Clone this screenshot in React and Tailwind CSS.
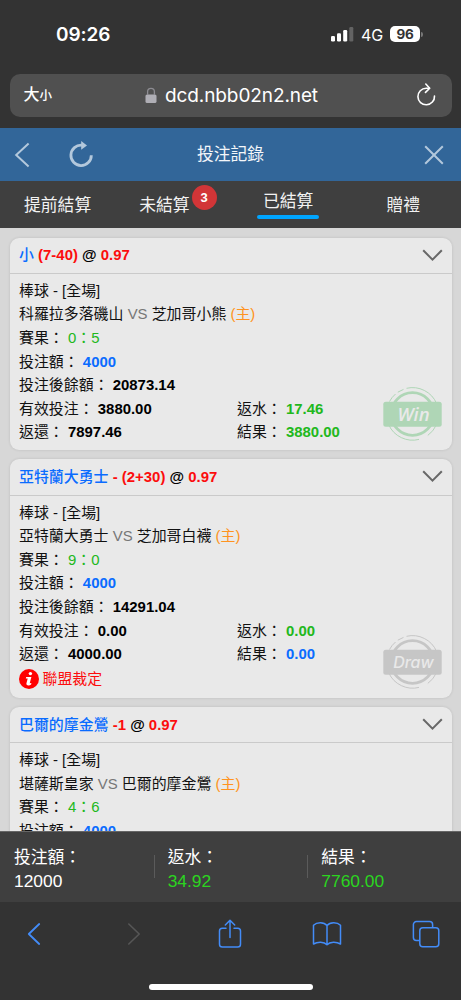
import clsx from 'clsx';

const bets = [
  {
    id: 1,
    pick: '小',
    line: '(7-40)',
    odds: '0.97',
    away: '科羅拉多落磯山',
    home: '芝加哥小熊',
    score: '0：5',
    stake: '4000',
    balance: '20873.14',
    settled: { valid: '3880.00', rebate: '17.46', returned: '7897.46', result: '3880.00' },
    status: 'Win',
  },
  {
    id: 2,
    pick: '亞特蘭大勇士',
    line: '- (2+30)',
    odds: '0.97',
    away: '亞特蘭大勇士',
    home: '芝加哥白襪',
    score: '9：0',
    stake: '4000',
    balance: '14291.04',
    settled: { valid: '0.00', rebate: '0.00', returned: '4000.00', result: '0.00' },
    status: 'Draw',
    notice: '聯盟裁定',
  },
  {
    id: 3,
    pick: '巴爾的摩金鶯',
    line: '-1',
    odds: '0.97',
    away: '堪薩斯皇家',
    home: '巴爾的摩金鶯',
    score: '4：6',
    stake: '4000',
  },
];

const tabs = [
  { label: '提前結算' },
  { label: '未結算', badge: 3 },
  { label: '已結算', active: true },
  { label: '贈禮' },
];

const totals = [
  { label: '投注額：', value: '12000', color: 'text-white' },
  { label: '返水：', value: '34.92', color: 'text-[#2bd51f]' },
  { label: '結果：', value: '7760.00', color: 'text-[#2bd51f]' },
];

function StatusBar() {
  return (
    <div className="flex h-[74px] items-start justify-between pl-[56px] pr-[38px] pt-[22px] font-['Inter','Liberation_Sans',sans-serif] text-white">
      <span className="pt-px text-[19px] font-semibold leading-6 tracking-[-0.1px]">09:26</span>
      <div className="flex h-6 items-center">
        <svg width="24" height="16" viewBox="0 0 24 16" className="mr-[7px]">
          <rect x="1" y="10" width="4" height="5.5" rx="1.2" fill="#fff" />
          <rect x="7" y="7.3" width="4" height="8.2" rx="1.2" fill="#fff" />
          <rect x="13.2" y="4" width="4" height="11.5" rx="1.2" fill="#fff" />
          <rect x="19.3" y="1" width="4" height="14.5" rx="1.2" fill="#636363" />
        </svg>
        <span className="mr-[7px] pt-px text-[16px] leading-6 tracking-[-0.1px]">4G</span>
        <span className="flex h-4 w-[30px] items-center justify-center rounded-[5px] bg-white text-[13.5px] font-bold leading-4 tracking-[-0.2px] text-[#333]">96</span>
        <span className="ml-px h-[5px] w-[2px] rounded-r-full bg-[#777]" />
      </div>
    </div>
  );
}

function AddressBar() {
  return (
    <div className="mx-[9.5px] flex h-[42.5px] items-center justify-between rounded-[10px] bg-[#505050] pl-[14px] pr-[16px] text-white">
      <span className="w-[40px] whitespace-nowrap pt-px font-medium leading-6">
        <span className="text-[16px]">大</span>
        <span className="text-[12.5px]">小</span>
      </span>
      <div className="flex items-center pl-[2px]">
        <svg width="12" height="17" viewBox="0 0 12 17" className="mr-[8px]">
          <rect x="0.5" y="7.5" width="11" height="8.5" rx="1.6" fill="#afaeb5" />
          <path d="M2.6 8V4.7a3.4 3.4 0 0 1 6.8 0V8" fill="none" stroke="#8d8c92" strokeWidth="1.3" />
        </svg>
        <span className="pt-px font-['Inter','Liberation_Sans',sans-serif] text-[19px] leading-6 tracking-[-0.1px]">dcd.nbb02n2.net</span>
      </div>
      <span className="flex w-[38px] justify-end">
        <svg width="20" height="24" viewBox="0 0 20 24" fill="none" stroke="#fff" strokeWidth="1.6" strokeLinecap="round" strokeLinejoin="round">
          <path d="M13.3 5.2H10.2A8.3 8.3 0 1 0 18.5 13" />
          <path d="M9.8 1l3.9 4.2-4.2 4.2" />
        </svg>
      </span>
    </div>
  );
}

function TitleBar() {
  return (
    <div className="grid h-[53px] grid-cols-3 items-center bg-[#326699]">
      <div className="flex items-center pl-[14px]">
        <svg width="17" height="26" viewBox="0 0 17 26" fill="none" stroke="#b3c8dc" strokeWidth="2">
          <path d="M14.6 1.6L2.2 13l12.4 11.4" />
        </svg>
        <svg width="26" height="28" viewBox="0 0 26 28" className="ml-[37px]">
          <path d="M14 4.2A10.2 10.2 0 1 0 23.3 14.2" fill="none" stroke="#b3c8dc" strokeWidth="2.8" />
          <path d="M13.2 0l5.8 4.6-5.800 4.200z" fill="#b3c8dc" />
        </svg>
      </div>
      <h1 className="text-center text-[16.8px] font-normal text-[#f4f7fa]">投注記錄</h1>
      <div className="flex justify-end pr-[17px]">
        <svg width="20" height="20" viewBox="0 0 20 20" stroke="#b3c8dc" strokeWidth="2">
          <path d="M1.2 1.2l17.6 17.6M18.8 1.2l-17.6 17.6" />
        </svg>
      </div>
    </div>
  );
}

function Tabs() {
  return (
    <div className="grid h-[47px] shrink-0 grid-cols-4 bg-[#3f3f3f] text-[16.8px] leading-6 text-[#f2f2f2]">
      {tabs.map((tab) => (
        <div key={tab.label} className={clsx('flex justify-center', tab.active ? 'pt-[9px]' : 'pt-[13px]', tab.badge && 'pr-[17px]')}>
          <div className="relative">
            {tab.label}
            {tab.active && <div className="-mx-[6px] mt-[0.5px] h-1 rounded-full bg-[#00a5ff]" />}
            {tab.badge && (
              <span className="absolute -right-[27px] -top-[9px] flex size-[25px] items-center justify-center rounded-full bg-[#d23537] font-['Liberation_Sans',sans-serif] text-[13px] font-bold text-white">
                {tab.badge}
              </span>
            )}
          </div>
        </div>
      ))}
    </div>
  );
}

function Stamp({ status }) {
  const color = status === 'Win' ? '#afd6b6' : '#c6c6c6';
  return (
    <svg width="59" height="54" viewBox="0 0 59 54" className="absolute bottom-[9px] right-[9.5px]">
      <circle cx="29.5" cy="27" r="21.3" fill="none" stroke={color} strokeWidth="2.8" />
      <path
        d="M23.5 1.3A26.3 26.3 0 0 1 53.6 16.5M14.8 5.2L20.5 2.4M6.5 14.5A26.3 26.3 0 0 1 12.5 7M5.8 38A26.3 26.3 0 0 0 36 52.4M44.8 48.4A26.3 26.3 0 0 0 53.3 38"
        fill="none"
        stroke={color}
        strokeWidth="1"
      />
      <rect x="0.3" y="14.7" width="58.4" height="25" rx="2.5" fill={color} />
      <text
        x="30.5"
        y={status === 'Win' ? 33.6 : 33}
        textAnchor="middle"
        fill="#e9e9e9"
        className={clsx('italic', status === 'Win' ? "font-['Open_Sans',sans-serif] text-[18.5px] font-semibold" : "font-['Inter','Liberation_Sans',sans-serif] text-[16px] font-medium")}
      >
        {status}
      </text>
    </svg>
  );
}

function Field({ label, value, color = 'text-black' }) {
  return (
    <div>
      {label}： <b className={color}>{value}</b>
    </div>
  );
}

function BetCard({ bet }) {
  const { settled } = bet;
  return (
    <div className="relative shrink-0 rounded-[9px] bg-[#e9e9e9] text-[14.93px] text-[#111] shadow-[0_0_3px_rgba(0,0,0,0.12)]">
      <div className="flex h-[36.2px] items-center justify-between border-b border-[#cacaca] pl-[9.5px] pr-[9px]">
        <div className="pt-px font-bold">
          <span className="font-medium text-[#0a6cff]">{bet.pick}</span>{' '}
          <span className="text-[#fc0d0d]">{bet.line}</span> <span className="text-black">@</span>{' '}
          <span className="text-[#fc0d0d]">{bet.odds}</span>
        </div>
        <svg width="21" height="13" viewBox="0 0 21 13" fill="none" stroke="#686868" strokeWidth="2">
          <path d="M1.2 1.3l9.3 9.4 9.3-9.4" />
        </svg>
      </div>
      <div className="px-[9.5px] pb-[6px] pt-[5.1px] leading-[23.6px]">
        <div>棒球 - [全場]</div>
        <div>
          {bet.away} <span className="text-[#777]">VS</span> {bet.home} <span className="text-[#ff9320]">(主)</span>
        </div>
        <div>
          賽果： <span className="text-[#22b81c]">{bet.score}</span>
        </div>
        <Field label="投注額" value={bet.stake} color="text-[#0a6cff]" />
        {bet.balance && <Field label="投注後餘額" value={bet.balance} />}
        {settled && (
          <div className="grid grid-cols-[218px_1fr]">
            <Field label="有效投注" value={settled.valid} />
            <Field label="返水" value={settled.rebate} color="text-[#22b81c]" />
            <Field label="返還" value={settled.returned} />
            <Field label="結果" value={settled.result} color={bet.status === 'Win' ? 'text-[#22b81c]' : 'text-[#0a6cff]'} />
          </div>
        )}
        {bet.notice && (
          <div className="flex h-[25.8px] items-center text-[#fc0d0d]">
            <svg width="20" height="20" viewBox="0 0 20 20" className="mr-[3.5px]">
              <circle cx="10" cy="10" r="10" fill="#f00" />
              <circle cx="11.4" cy="4.6" r="1.7" fill="#fff" />
              <path d="M7.2 7.9h5.2l-1.7 6.4 1.7-.3-.3 1.5c-1.6 1.2-5.2 1.4-4.7-.9l1.3-5.1H6.8z" fill="#fff" />
            </svg>
            {bet.notice}
          </div>
        )}
      </div>
      {bet.status && <Stamp status={bet.status} />}
    </div>
  );
}

function Summary() {
  return (
    <div className="grid h-[71px] shrink-0 grid-cols-3 border-t border-[#666] bg-[#3f3f3f] pt-[14px] text-white">
      {totals.map((item, i) => (
        <div key={item.label} className="relative pl-[14px]">
          {i > 0 && <span className="absolute left-0 top-[9px] h-[23px] w-px bg-[#5b5b5b]" />}
          <div className="text-[16.8px] leading-6">{item.label}</div>
          <div className={clsx('text-[17.4px] leading-[22px]', item.color)}>{item.value}</div>
        </div>
      ))}
    </div>
  );
}

function Toolbar() {
  return (
    <div className="flex h-[98px] shrink-0 flex-col items-center justify-between bg-[#333] pb-[9px] pt-[16px]">
      <div className="flex h-[32px] w-full items-center justify-between pl-[27px] pr-[21px] text-[#438cf8]">
        <svg width="14" height="24" viewBox="0 0 14 24" fill="none" stroke="currentColor" strokeWidth="1.8" strokeLinecap="round" strokeLinejoin="round">
          <path d="M12.2 2L1.8 12l10.4 10" />
        </svg>
        <svg width="14" height="24" viewBox="0 0 14 24" fill="none" stroke="#565656" strokeWidth="1.6" strokeLinecap="round" strokeLinejoin="round" className="ml-[16px]">
          <path d="M1.8 2l10.4 10L1.8 22" />
        </svg>
        <svg width="24" height="30" viewBox="0 0 24 30" fill="none" stroke="currentColor" strokeWidth="1.5" strokeLinecap="round" strokeLinejoin="round" className="ml-[7px]">
          <path d="M8 9.3H4.3a2.8 2.8 0 0 0-2.8 2.8v13.2a2.8 2.8 0 0 0 2.8 2.8h15.4a2.8 2.8 0 0 0 2.8-2.8V12.1a2.8 2.8 0 0 0-2.8-2.8H16" />
          <path d="M12 18.5V1.5M7.3 6L12 1.3 16.7 6" />
        </svg>
        <svg width="30" height="26" viewBox="0 0 30 26" fill="none" stroke="currentColor" strokeWidth="1.5" strokeLinejoin="round" className="ml-[1px]">
          <path d="M15 4.4C12 1 5 0.8 1.5 4.3V23C5.5 20.6 12 20.4 15 23.8 18 20.4 24.5 20.6 28.5 23V4.3C25 0.8 18 1 15 4.4zM15 4.4V23.8" />
        </svg>
        <svg width="28" height="28" viewBox="0 0 28 28" fill="none" stroke="currentColor" strokeWidth="1.5" strokeLinejoin="round">
          <rect x="7.8" y="7.8" width="19" height="19" rx="3" />
          <path d="M7.8 20.5H4.4a3 3 0 0 1-3-3V4.6a3 3 0 0 1 3-3h13.2a3 3 0 0 1 3 3v3.2" />
        </svg>
      </div>
      <div className="mb-px h-[6px] w-[164px] rounded-full bg-white" />
    </div>
  );
}

export default function App() {
  return (
    <div className="flex h-[1000px] w-[461px] flex-col overflow-hidden bg-[#333] font-['Liberation_Sans','Noto_Sans_CJK_TC',sans-serif]">
      <div className="h-[128px] shrink-0">
        <StatusBar />
        <AddressBar />
      </div>
      <TitleBar />
      <Tabs />
      <main className="flex min-h-0 flex-1 flex-col gap-[9.4px] overflow-hidden bg-[#d7d7d7] px-[9.5px] pt-[9.5px]">
        {bets.map((bet) => (
          <BetCard key={bet.id} bet={bet} />
        ))}
      </main>
      <Summary />
      <Toolbar />
    </div>
  );
}
